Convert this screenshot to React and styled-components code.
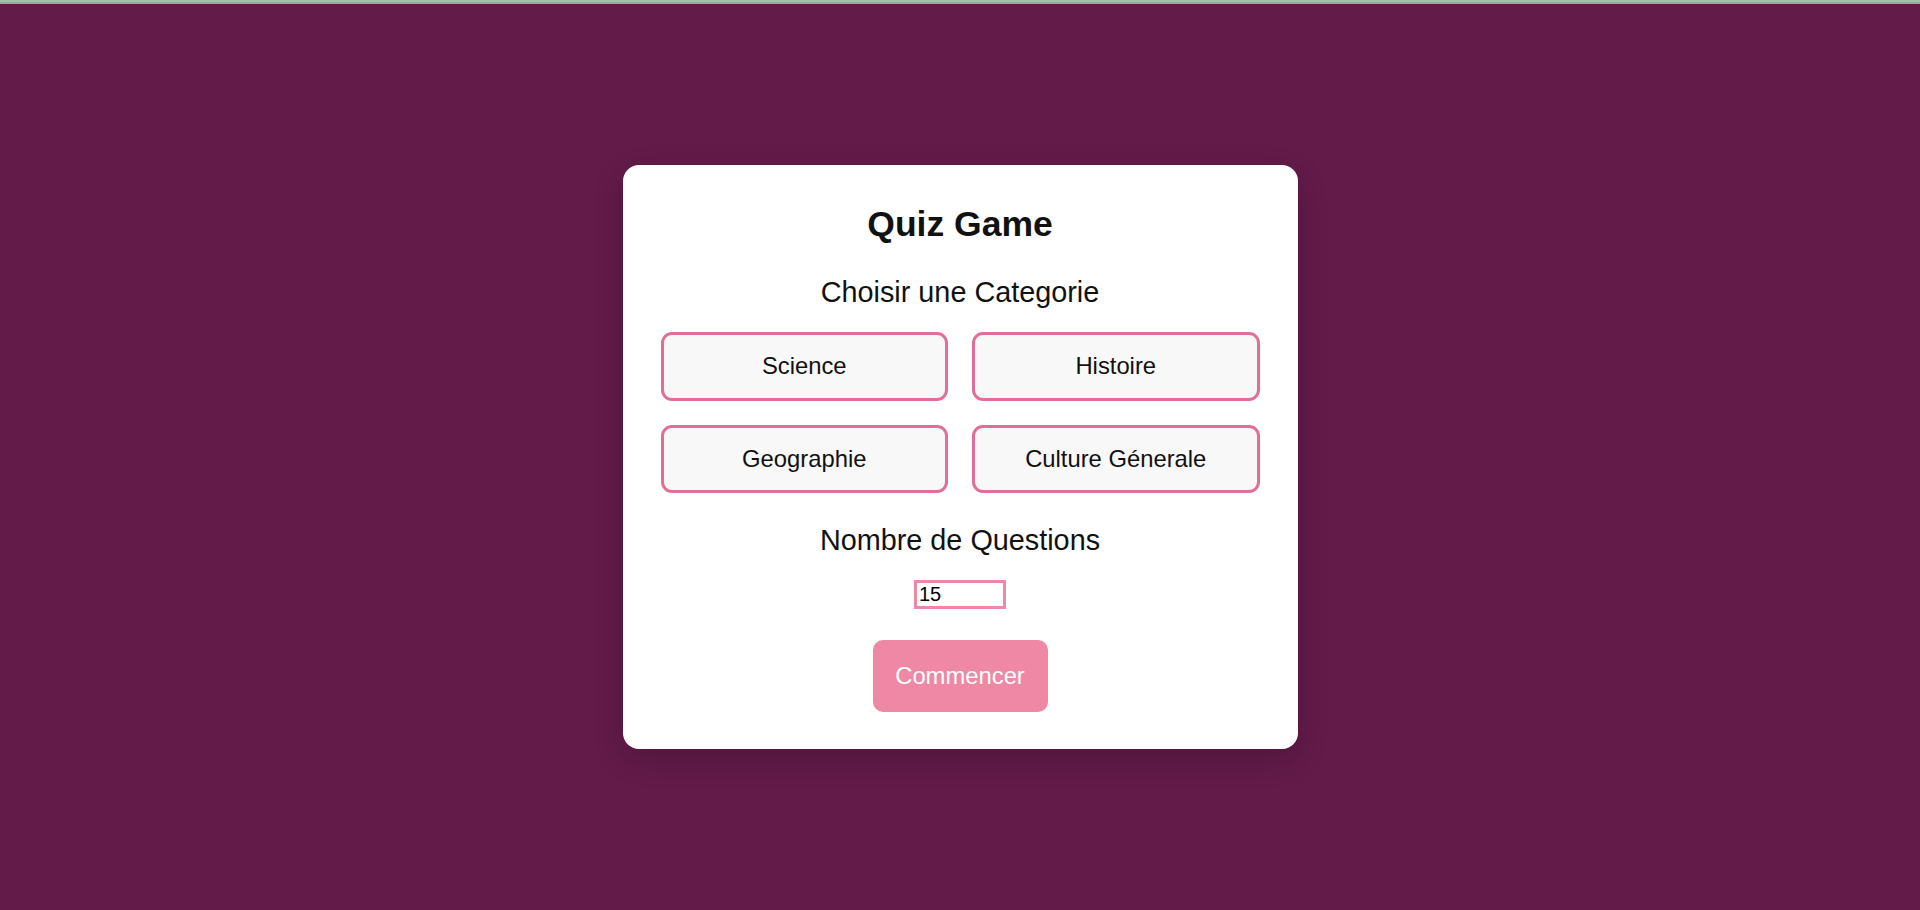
import React, {useState} from 'react';
import styled, {createGlobalStyle} from 'styled-components';

const categories = ['Science', 'Histoire', 'Geographie', 'Culture Génerale'];

const App = () => {
  const [count, setCount] = useState(15);
  const [category, setCategory] = useState(null);

  return (
    <>
      <GlobalStyle />
      <TopStrip />
      <Page>
        <Card>
          <Title>Quiz Game</Title>
          <SectionTitle>Choisir une Categorie</SectionTitle>
          <CategoryGrid>
            {categories.map(name => (
              <CategoryButton
                key={name}
                $active={category === name}
                onClick={() => setCategory(name)}
              >
                {name}
              </CategoryButton>
            ))}
          </CategoryGrid>
          <SectionTitle>Nombre de Questions</SectionTitle>
          <CountInput
            type="number"
            value={count}
            onChange={e => setCount(e.target.value)}
          />
          <StartButton>Commencer</StartButton>
        </Card>
      </Page>
    </>
  );
};

const GlobalStyle = createGlobalStyle`
  html, body {
    margin: 0;
    padding: 0;
    background: #631b4a;
    font-family: "Liberation Sans", Arial, sans-serif;
  }
  * {
    box-sizing: border-box;
  }
`;

const TopStrip = styled.div`
  height: 4px;
  background: linear-gradient(180deg, #a2c2aa 0%, #a2c2aa 50%, #8fb19a 50%, #8fb19a 100%);
`;

const Page = styled.div`
  min-height: calc(100vh - 4px);
  display: flex;
  align-items: center;
  justify-content: center;
`;

const Card = styled.div`
  width: 675px;
  background: #ffffff;
  border-radius: 16px;
  padding: 39px 38px 37px;
  display: flex;
  flex-direction: column;
  align-items: center;
  box-shadow: 0 10px 30px rgba(0, 0, 0, 0.2);
`;

const Title = styled.h1`
  margin: 0;
  font-size: 35.5px;
  line-height: 41px;
  font-weight: bold;
  color: #111;
`;

const SectionTitle = styled.h2`
  margin: 31px 0 0;
  font-size: 28.8px;
  line-height: 33px;
  font-weight: normal;
  color: #111;
`;

const CategoryGrid = styled.div`
  width: 100%;
  margin-top: 23px;
  display: grid;
  grid-template-columns: 1fr 1fr;
  gap: 24px;
`;

const CategoryButton = styled.button`
  height: 68.5px;
  border: 3px solid ${p => (p.$active ? '#c2185b' : '#e06e98')};
  border-radius: 11px;
  background: #f8f8f8;
  font-family: "Liberation Sans", Arial, sans-serif;
  font-size: 23.8px;
  color: #111;
  cursor: pointer;
`;

const CountInput = styled.input`
  margin-top: 23px;
  width: 92px;
  height: 29px;
  padding: 0 2px;
  border: 3px solid #ee88a4;
  font-family: "Liberation Sans", Arial, sans-serif;
  font-size: 20px;
  color: #000;
  outline: none;
  -moz-appearance: textfield;
  &::-webkit-outer-spin-button,
  &::-webkit-inner-spin-button {
    -webkit-appearance: none;
    margin: 0;
  }
`;

const StartButton = styled.button`
  margin-top: 31px;
  width: 175px;
  height: 72px;
  border: none;
  border-radius: 10px;
  background: #ee88a4;
  color: #fff;
  font-family: "Liberation Sans", Arial, sans-serif;
  font-size: 23.8px;
  cursor: pointer;
`;

export default App;
